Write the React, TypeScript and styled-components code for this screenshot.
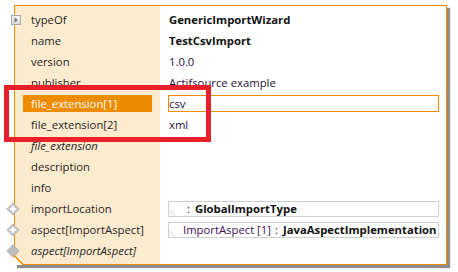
import styled, { createGlobalStyle } from 'styled-components';

const GlobalStyle = createGlobalStyle`
  html, body {
    margin: 0;
    background: #ffffff;
  }
  body {
    font-family: 'Open Sans', 'Noto Sans', sans-serif;
    font-size: 11.3px;
  }
`;

const Page = styled.div`
  position: relative;
  width: 458px;
  height: 272px;
  padding: 5px 0 0 14px;
  box-sizing: border-box;
`;

const Frame = styled.div`
  position: relative;
  width: 433px;
  box-sizing: border-box;
  padding: 3px 0 3px;
  border: 1px solid #ee8c00;
  background: linear-gradient(to right, #fcebcf 145px, #ffffff 145px);
  box-shadow: 3px 3px 1px rgba(0, 0, 0, 0.45);

  &::after {
    content: '';
    position: absolute;
    left: -1px;
    bottom: -1px;
    width: 10px;
    height: 10px;
    background: linear-gradient(
      to top right,
      #ffffff calc(50% - 0.8px),
      #ee8c00 calc(50% - 0.8px),
      #ee8c00 calc(50% + 0.6px),
      transparent calc(50% + 0.6px)
    );
  }
`;

const Row = styled.div`
  display: grid;
  grid-template-columns: 145px 1fr;
  height: 21px;
  align-items: center;
  position: relative;
`;

const Label = styled.div<{ $selected?: boolean; $italic?: boolean }>`
  height: 17px;
  line-height: 17px;
  margin: 0 8px;
  padding-left: 8px;
  color: ${(p) => (p.$selected ? '#ffffff' : '#1e1e1e')};
  background: ${(p) => (p.$selected ? '#ee8c00' : 'transparent')};
  font-style: ${(p) => (p.$italic ? 'italic' : 'normal')};
  white-space: nowrap;
`;

const Value = styled.div<{ $bold?: boolean; $boxed?: boolean }>`
  height: 17px;
  line-height: 15px;
  margin: 0 7px 0 8px;
  box-sizing: border-box;
  color: ${(p) => (p.$bold ? '#111111' : '#2a0f3a')};
  font-weight: ${(p) => (p.$bold ? 700 : 400)};
  border: 1px solid ${(p) => (p.$boxed ? '#ee8c00' : 'transparent')};
  white-space: nowrap;
`;

const RefBox = styled.div<{ $indent: number }>`
  position: relative;
  height: 16px;
  line-height: 14px;
  margin: 0 7px 0 8px;
  box-sizing: border-box;
  border: 1px solid #cfcfcf;
  padding-left: ${(p) => p.$indent}px;
  white-space: nowrap;
  overflow: hidden;
  color: #111111;

  &::before {
    content: '';
    position: absolute;
    left: -1px;
    bottom: -1px;
    width: 8px;
    height: 8px;
    background: linear-gradient(
      to top right,
      #ffffff calc(50% - 0.6px),
      #cfcfcf calc(50% - 0.6px),
      #cfcfcf calc(50% + 0.6px),
      transparent calc(50% + 0.6px)
    );
  }
`;

const Type = styled.span`
  font-weight: 700;
`;

const Role = styled.span`
  color: #3c0f5a;
`;

const Sep = styled.span`
  margin: 0 5px 0 4px;
`;

const Colon = styled.span`
  margin-right: 5px;
`;

const Marker = styled.span<{ $left: number }>`
  position: absolute;
  left: ${(p) => p.$left}px;
  top: 50%;
  transform: translateY(-50%);
  display: flex;
`;

const Highlight = styled.div`
  position: absolute;
  left: 4px;
  top: 85px;
  width: 207px;
  height: 57px;
  box-sizing: border-box;
  border: 5px solid #e8202a;
  pointer-events: none;
`;

const ExpandIcon = () => (
  <svg width="10" height="10" viewBox="0 0 10 10">
    <defs>
      <linearGradient id="eg" x1="0" y1="0" x2="0" y2="1">
        <stop offset="0" stopColor="#f4f4f4" />
        <stop offset="1" stopColor="#d8d8d8" />
      </linearGradient>
    </defs>
    <rect x="0.5" y="0.5" width="9" height="9" fill="url(#eg)" stroke="#a9a9a9" />
    <path d="M3.5 2.5 L7 5 L3.5 7.5 Z" fill="#7a7a7a" />
  </svg>
);

const PlusDiamond = () => (
  <svg width="14" height="14" viewBox="0 0 14 14">
    <path d="M7 0.8 L13.2 7 L7 13.2 L0.8 7 Z" fill="#c9c9c9" stroke="#b8b8b8" />
    <path d="M7 4 V10 M4 7 H10" stroke="#ffffff" strokeWidth="2" />
  </svg>
);

const Diamond = () => (
  <svg width="14" height="14" viewBox="0 0 14 14">
    <path d="M7 0.8 L13.2 7 L7 13.2 L0.8 7 Z" fill="#bdbdbd" stroke="#b0b0b0" />
  </svg>
);

export default function App() {
  return (
    <>
      <GlobalStyle />
      <Page>
        <Frame>
          <Row>
            <Marker $left={-4}>
              <ExpandIcon />
            </Marker>
            <Label>typeOf</Label>
            <Value $bold>GenericImportWizard</Value>
          </Row>
          <Row>
            <Label>name</Label>
            <Value $bold>TestCsvImport</Value>
          </Row>
          <Row>
            <Label>version</Label>
            <Value>1.0.0</Value>
          </Row>
          <Row>
            <Label>publisher</Label>
            <Value>Actifsource example</Value>
          </Row>
          <Row>
            <Label $selected>file_extension[1]</Label>
            <Value $boxed>csv</Value>
          </Row>
          <Row>
            <Label>file_extension[2]</Label>
            <Value>xml</Value>
          </Row>
          <Row>
            <Label $italic>file_extension</Label>
            <Value />
          </Row>
          <Row>
            <Label>description</Label>
            <Value />
          </Row>
          <Row>
            <Label>info</Label>
            <Value />
          </Row>
          <Row>
            <Marker $left={-9}>
              <PlusDiamond />
            </Marker>
            <Label>importLocation</Label>
            <RefBox $indent={18}>
              <Colon>:</Colon>
              <Type>GlobalImportType</Type>
            </RefBox>
          </Row>
          <Row>
            <Marker $left={-9}>
              <PlusDiamond />
            </Marker>
            <Label>aspect[ImportAspect]</Label>
            <RefBox $indent={14}>
              <Role>ImportAspect [1]</Role>
              <Sep>:</Sep>
              <Type>JavaAspectImplementation</Type>
            </RefBox>
          </Row>
          <Row>
            <Marker $left={-9}>
              <Diamond />
            </Marker>
            <Label $italic>aspect[ImportAspect]</Label>
            <Value />
          </Row>
        </Frame>
        <Highlight />
      </Page>
    </>
  );
}
